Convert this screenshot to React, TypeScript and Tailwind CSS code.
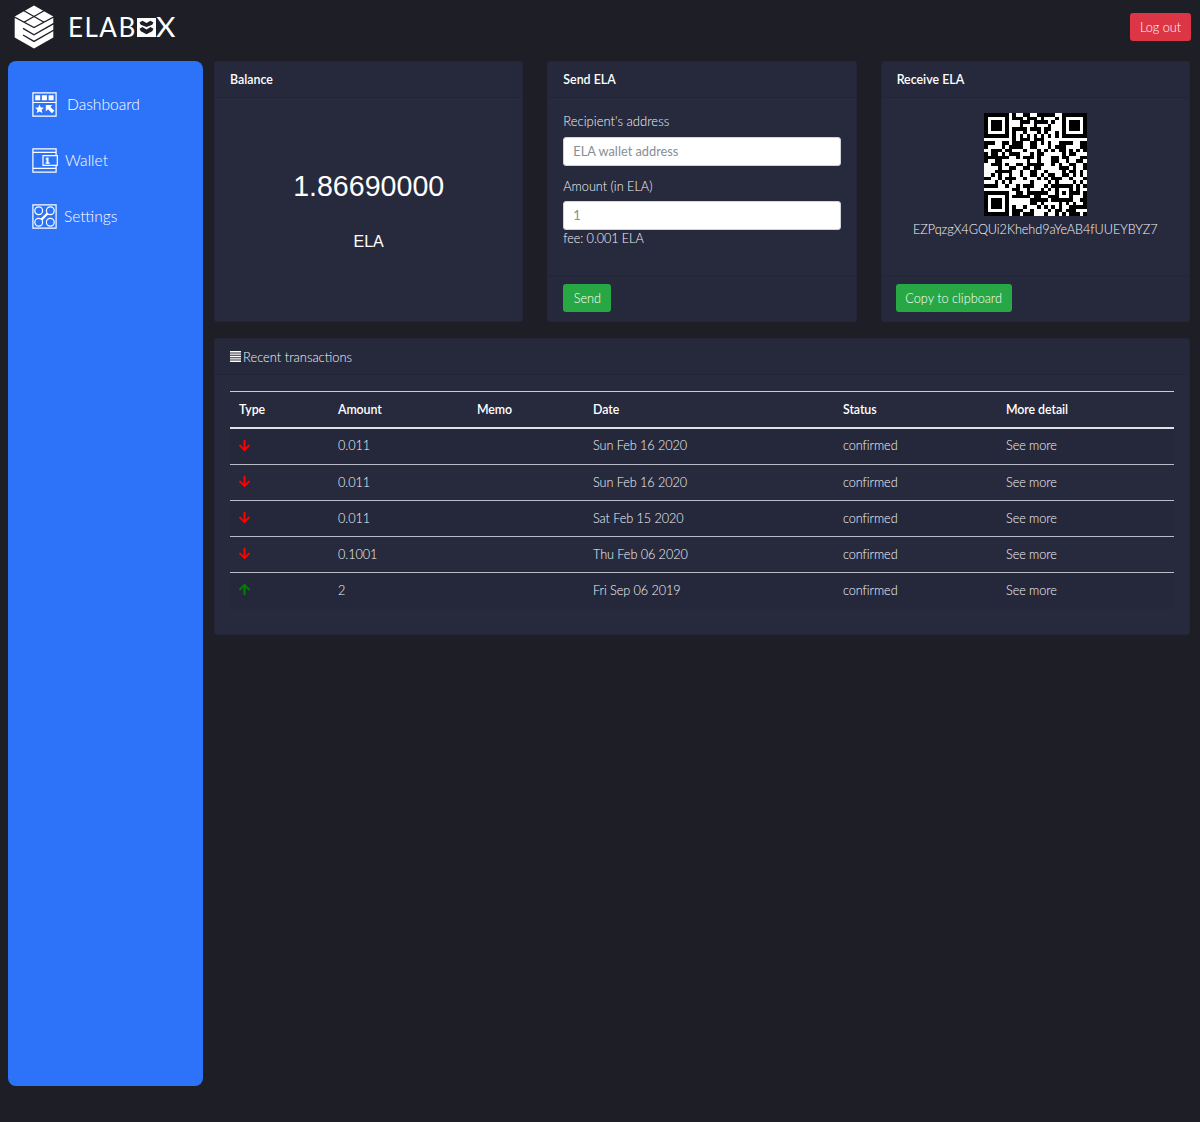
import { FC, ReactNode } from "react";
import { FaArrowDown, FaArrowUp } from "react-icons/fa";
import clsx from "clsx";

const ADDRESS = "EZPqzgX4GQUi2Khehd9aYeAB4fUUEYBYZ7";

const transactions = [
  { type: "out", amount: "0.011", date: "Sun Feb 16 2020" },
  { type: "out", amount: "0.011", date: "Sun Feb 16 2020" },
  { type: "out", amount: "0.011", date: "Sat Feb 15 2020" },
  { type: "out", amount: "0.1001", date: "Thu Feb 06 2020" },
  { type: "in", amount: "2", date: "Fri Sep 06 2019" },
];

// multiplication in GF(256) with the QR polynomial
const gfMul = (a: number, b: number) => {
  let r = 0;
  for (let i = 7; i >= 0; i--) {
    r = (r << 1) ^ ((r >>> 7) * 0x11d);
    r ^= ((b >>> i) & 1) * a;
  }
  return r;
};

// version 3, level L, mask 1: 29x29 modules, 55 data and 15 correction codewords
const SIZE = 29;
const DATA = 55;
const ECC = 15;
const FORMAT = 0b111001011110011;

const encode = (text: string) => {
  const bits: number[] = [];
  const push = (val: number, len: number) => {
    for (let i = len - 1; i >= 0; i--) bits.push((val >>> i) & 1);
  };
  push(4, 4);
  push(text.length, 8);
  for (const c of text) push(c.charCodeAt(0), 8);
  push(0, 4);
  for (let pad = 0xec; bits.length < DATA * 8; pad ^= 0xec ^ 0x11) push(pad, 8);

  const gen: number[] = new Array(ECC).fill(0);
  gen[ECC - 1] = 1;
  let root = 1;
  for (let i = 0; i < ECC; i++) {
    for (let j = 0; j < ECC; j++) {
      gen[j] = gfMul(gen[j], root) ^ (j < ECC - 1 ? gen[j + 1] : 0);
    }
    root = gfMul(root, 2);
  }
  const ecc: number[] = new Array(ECC).fill(0);
  for (let i = 0; i < DATA; i++) {
    const byte = parseInt(bits.slice(i * 8, i * 8 + 8).join(""), 2);
    const factor = byte ^ ecc.shift()!;
    ecc.push(0);
    gen.forEach((g, j) => (ecc[j] ^= gfMul(g, factor)));
  }
  ecc.forEach((e) => push(e, 8));

  const grid: (number | null)[][] = Array.from({ length: SIZE }, () => new Array(SIZE).fill(null));
  const set = (x: number, y: number, v: number | boolean) => {
    if (x >= 0 && y >= 0 && x < SIZE && y < SIZE) grid[y][x] = Number(v);
  };

  // timing, finder and alignment patterns
  for (let i = 0; i < SIZE; i++) {
    set(6, i, i % 2 === 0);
    set(i, 6, i % 2 === 0);
  }
  [[3, 3], [SIZE - 4, 3], [3, SIZE - 4]].forEach(([cx, cy]) => {
    for (let dy = -4; dy <= 4; dy++) {
      for (let dx = -4; dx <= 4; dx++) {
        const d = Math.max(Math.abs(dx), Math.abs(dy));
        set(cx + dx, cy + dy, d !== 2 && d !== 4);
      }
    }
  });
  for (let dy = -2; dy <= 2; dy++) {
    for (let dx = -2; dx <= 2; dx++) {
      set(22 + dx, 22 + dy, Math.max(Math.abs(dx), Math.abs(dy)) !== 1);
    }
  }

  // format bits
  const bit = (i: number) => (FORMAT >>> i) & 1;
  for (let i = 0; i <= 5; i++) set(8, i, bit(i));
  set(8, 7, bit(6));
  set(8, 8, bit(7));
  set(7, 8, bit(8));
  for (let i = 9; i < 15; i++) set(14 - i, 8, bit(i));
  for (let i = 0; i < 8; i++) set(SIZE - 1 - i, 8, bit(i));
  for (let i = 8; i < 15; i++) set(8, SIZE - 15 + i, bit(i));
  set(8, SIZE - 8, 1);

  let n = 0;
  for (let right = SIZE - 1; right >= 1; right -= 2) {
    if (right === 6) right = 5;
    for (let v = 0; v < SIZE; v++) {
      for (let j = 0; j < 2; j++) {
        const x = right - j;
        const y = ((right + 1) & 2) === 0 ? SIZE - 1 - v : v;
        if (grid[y][x] === null) {
          grid[y][x] = (bits[n++] ?? 0) ^ (y % 2 === 0 ? 1 : 0);
        }
      }
    }
  }
  return grid;
};

const QRCode: FC<{ value: string }> = ({ value }) => (
  <svg className="w-[103px] h-[103px] shrink-0" viewBox="0 0 29 29" shapeRendering="crispEdges">
    <rect width="29" height="29" fill="#fff" />
    <path
      fill="#000"
      d={encode(value)
        .flatMap((row, y) => row.map((v, x) => (v ? `M${x} ${y}h1v1h-1z` : "")))
        .join("")}
    />
  </svg>
);

const Logo = () => (
  <div className="flex items-center">
    <svg className="w-10 h-11" viewBox="0 0 40 44">
      <path fill="#fff" d="M20 .5 39.3 11.5V32.5L20 43.5.7 32.5V11.5z" />
      <g fill="none" stroke="#1e1f26" strokeWidth="1.3">
        <path d="M0 11.8 20 22.6 40 11.8M10 5.8 30 17.2M30 5.8 10 17.2" />
        <path d="M9 23.4 20 29.8 40 18.4M9 30 20 36.4 40 25" />
      </g>
    </svg>
    <div className="flex items-center ml-[14px] text-[26px] leading-none text-white">
      <span className="tracking-[1.5px]">ELAB</span>
      <svg className="w-[19px] h-[19px]" viewBox="0 0 19 18" preserveAspectRatio="none">
        <rect width="19" height="18" fill="#fff" />
        <path fill="#1e1f26" d="M2.5 4.200 5.500 2.500l4 2.300 4-2.300 3 1.700-1.300 2.100-5.700 2.200-5.700-2.200zM2.500 10.200l3-1.700 4 2.300 4-2.300 3 1.700-1.300 2.300-5.700 3-5.700-3z" />
      </svg>
      <span className="inline-block origin-left scale-x-115">X</span>
    </div>
  </div>
);

const DashboardIcon = () => (
  <svg className="w-[25px] h-[25px]" viewBox="0 0 25 25" fill="#fff">
    <path fill="none" stroke="#fff" strokeWidth="1.2" d="M.9.9h23.2v23.2H.9zM.9 10.5h23.2" />
    <path d="M3.2 3.2h5v5h-5zM9.9 3.2h5v5h-5zM16.6 3.2h5v5h-5z" />
    <path d="m7.5 12.5 1.300 2.900 3.200.3-2.400 2.100.7 3.200-2.800-1.600L4.700 21l.7-3.200L3 15.700l3.200-.3z" />
    <path d="M13.800 13h6.500l-1.900 2 3.900 3.800-2.400 2.400-3.900-3.900-2.200 2.200z" />
  </svg>
);

const WalletIcon = () => (
  <svg className="w-[26px] h-[25px]" viewBox="0 0 26 25" fill="none" stroke="#fff" strokeWidth="1.2">
    <path d="M24.1 7.600V.9H.9v23.200h23.200v-6.700M.9 4.300h23.200M.9 20.400h23.200" />
    <path d="M11 7.600h14.300v9.800H11z" />
    <path strokeWidth="2" d="M15.500 9.500v6" />
    <path d="M13.700 10.800h2M13.500 15.200h4.200" />
  </svg>
);

const SettingsIcon = () => (
  <svg className="w-[25px] h-[25px]" viewBox="0 0 25 25" fill="none" stroke="#fff" strokeWidth="1.2">
    <path d="M.9.9h23.2v23.2H.9z" />
    <circle cx="6.7" cy="6.7" r="3.9" />
    <circle cx="18.3" cy="6.7" r="3.9" />
    <circle cx="6.7" cy="18.3" r="3.9" />
    <circle cx="18.3" cy="18.3" r="3.9" />
    <path strokeWidth="2.4" d="m9.500 15.500 6-6" />
  </svg>
);

const ListIcon = () => (
  <svg className="w-[11px] h-[11px]" viewBox="0 0 11 11" fill="#fff">
    <path d="M0 0h11v1.400H0zM0 2.400h11v1.400H0zM0 4.800h11v1.400H0zM0 7.200h11v1.400H0zM0 9.600h11V11H0z" />
  </svg>
);

interface CardProps {
  title: ReactNode;
  footer?: ReactNode;
  className?: string;
  children: ReactNode;
}

const Card: FC<CardProps> = ({ title, footer, className, children }) => (
  <section className={clsx("flex flex-col rounded-[3px] bg-[#272a3d] border border-[#242638]", className)}>
    <header className="h-9 px-[15px] flex items-center border-b border-[#222538] bg-[#26293c]">{title}</header>
    <div className="flex-1 px-[15px]">{children}</div>
    {footer && (
      <footer className="h-[46px] px-[15px] pb-0.5 flex items-center border-t border-[#222538] bg-[#26293c]">{footer}</footer>
    )}
  </section>
);

const Title: FC<{ children: ReactNode }> = ({ children }) => (
  <h2 className="text-white text-[12.4px] font-semibold">{children}</h2>
);

const Button: FC<{ children: ReactNode; className: string }> = ({ children, className }) => (
  <button className={clsx("h-7 rounded-[3px] text-[12.7px] text-white", className)}>{children}</button>
);

const Input: FC<{ placeholder: string; className: string }> = ({ placeholder, className }) => (
  <input
    className={clsx(
      "block w-full h-[29px] rounded-[3px] bg-white border border-[#ced4da] px-[9px] pb-0.5 font-normal text-[12.8px] placeholder:text-[#868e96]",
      className
    )}
    placeholder={placeholder}
  />
);

const App = () => {
  return (
    <div className="min-h-[1122px] bg-[#1e1f26] font-['Lato','Open_Sans',sans-serif] font-light text-[12.7px] leading-5 text-[#f4f5fa]">
      <div className="flex items-start justify-between h-[61px] pl-[14px] pr-[9px]">
        <div className="pt-[5px] font-normal">
          <Logo />
        </div>
        <Button className="mt-[13px] w-[61px] bg-[#dc3545]">Log out</Button>
      </div>

      <div className="flex pl-2 pr-[10px]">
        <nav className="w-[195px] h-[1025px] shrink-0 rounded-lg bg-[#2d73f9] pl-6 pt-[15px] text-[15.6px] text-white">
          <a className="flex items-center h-14 gap-[10px]">
            <DashboardIcon />
            <span className="pb-px">Dashboard</span>
          </a>
          <a className="flex items-center h-14 gap-[7px]">
            <WalletIcon />
            <span className="pb-px">Wallet</span>
          </a>
          <a className="flex items-center h-14 gap-[7px]">
            <SettingsIcon />
            <span className="pb-px">Settings</span>
          </a>
        </nav>

        <main className="flex-1 ml-[11px]">
          <div className="grid grid-cols-3 gap-6 h-[261px]">
            <Card title={<Title>Balance</Title>}>
              <div className="pt-[70px] text-center font-['Liberation_Sans',Arial,sans-serif] text-white">
                <p className="text-[28.6px] leading-9">1.86690000</p>
                <p className="mt-7 text-base leading-5">ELA</p>
              </div>
            </Card>
            <Card title={<Title>Send ELA</Title>} footer={<Button className="w-12 bg-[#28a745]">Send</Button>}>
              <label className="block mt-[13px] text-[13px]">Recipient's address</label>
              <Input className="mt-[6px]" placeholder="ELA wallet address" />
              <label className="block mt-[10px]">Amount (in ELA)</label>
              <Input className="mt-[5px]" placeholder="1" />
              <p className="-mt-0.5 tracking-[-0.1px]">fee: 0.001 ELA</p>
            </Card>
            <Card
              title={<Title>Receive ELA</Title>}
              footer={<Button className="-ml-px w-[116px] bg-[#28a745]">Copy to clipboard</Button>}
            >
              <div className="flex flex-col items-center pt-[15px]">
                <QRCode value={ADDRESS} />
                <p className="mt-[3px] tracking-[-0.07px]">{ADDRESS}</p>
              </div>
            </Card>
          </div>

          <Card
            className="mt-4 h-[297px]"
            title={
              <span className="flex items-center gap-0.5 text-[12.9px]">
                <ListIcon />
                Recent transactions
              </span>
            }
          >
            <table className="mt-[16px] w-full table-fixed text-left tracking-[-0.08px]">
              <colgroup>
                <col className="w-[99px]" />
                <col className="w-[139px]" />
                <col className="w-[116px]" />
                <col className="w-[250px]" />
                <col className="w-[163px]" />
                <col />
              </colgroup>
              <thead>
                <tr className="h-9 border-t border-t-[#c9ccd6] border-b-2 border-b-[#dee2e6] text-[12.4px] text-white">
                  {["Type", "Amount", "Memo", "Date", "Status", "More detail"].map((name) => (
                    <th key={name} className="pl-[9px] pt-px pb-0 font-semibold">
                      {name}
                    </th>
                  ))}
                </tr>
              </thead>
              <tbody>
                {transactions.map((tx, index) => (
                  <tr key={index} className="h-9 border-t border-[#b9bcc7] first:border-t-0 first:h-[37px] odd:bg-[#25283a]">
                    <td className="pl-2 pt-0 pb-0.5">
                      {tx.type === "in" ? (
                        <FaArrowUp className="text-[#008000] text-[13px]" />
                      ) : (
                        <FaArrowDown className="text-[#ff0000] text-[13px]" />
                      )}
                    </td>
                    <td className="pl-[9px] pt-0 pb-0.5">{tx.amount}</td>
                    <td></td>
                    <td className="pl-[9px] pt-0 pb-0.5">{tx.date}</td>
                    <td className="pl-[9px] pt-0 pb-0.5">confirmed</td>
                    <td className="pl-[9px] pt-0 pb-0.5">See more</td>
                  </tr>
                ))}
              </tbody>
            </table>
          </Card>
        </main>
      </div>
    </div>
  );
};

export default App;
